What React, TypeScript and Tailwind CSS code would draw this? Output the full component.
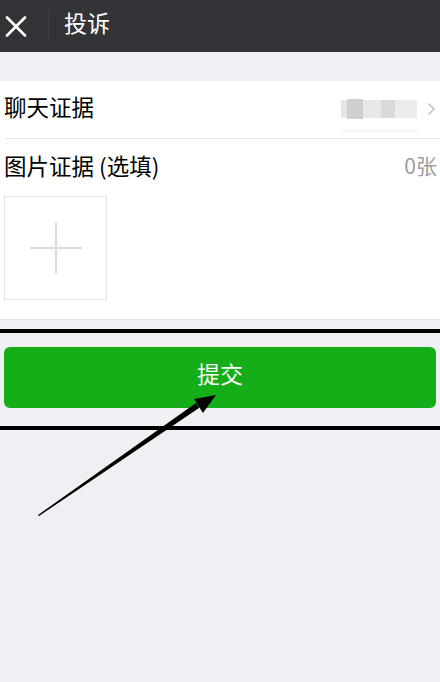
import React from "react";

export default function App() {
  const font = { fontFamily: '"Noto Sans CJK SC", "Noto Sans", sans-serif' };
  return (
    <div className="relative w-[440px] h-[682px] overflow-hidden bg-[#efeff4]" style={font}>
      {/* header */}
      <div className="h-[52px] bg-[#333438] flex items-center">
        <div className="w-[48px] h-full flex items-center pl-[5px]">
          <svg width="22" height="21" viewBox="0 0 22 21">
            <path d="M2 1.5 L20 19.5 M20 1.5 L2 19.5" stroke="#ffffff" strokeWidth="2.6" strokeLinecap="round" />
          </svg>
        </div>
        <div className="w-px h-[32px] bg-[#3e3f44]" />
        <div className="pl-[15px] text-[23px] leading-none text-white mb-[7px]">投诉</div>
      </div>

      <div className="h-[29px]" />

      {/* white section */}
      <div className="bg-white border-b border-[#e3e3e6] h-[239px] flex flex-col">
        <div className="h-[57px] flex items-center pl-[4px] pr-[4px] relative">
          <span className="text-[22.5px] text-black leading-none mb-[6px]">聊天证据</span>
          <div className="ml-auto flex items-center">
            <div className="flex items-center h-[20px] mr-[10px] mb-[2px]">
              <div className="w-[6px] h-[18px] bg-[#e6e6e6]" />
              <div className="w-[16px] h-[20px] bg-[#cfcfcf]" />
              <div className="w-[18px] h-[18px] bg-[#e8e8e8]" />
              <div className="w-[14px] h-[18px] bg-[#dadada]" />
              <div className="w-[22px] h-[18px] bg-[#ececec]" />
            </div>
            <svg width="9" height="14" viewBox="0 0 9 14" className="mb-[2px]">
              <path d="M1.5 1.5 L7 7 L1.5 12.5" fill="none" stroke="#c2c2c6" strokeWidth="1.6" />
            </svg>
          </div>
          <div className="absolute left-[342px] bottom-[6px] w-[76px] h-[2px] bg-[#f6f6f6]" />
        </div>
        <div className="h-px ml-[5px] bg-[#e5e5e5]" />
        <div className="h-[56px] flex items-center pl-[4px] pr-[3px]">
          <span className="text-[22.5px] text-black leading-none mb-[4px]">图片证据 (选填)</span>
          <span className="ml-auto text-[21px] text-[#9c9c9c] leading-none mb-[4px]">0张</span>
        </div>
        <div className="pl-[4px] pt-[1px]">
          <div className="w-[103px] h-[104px] border border-[#e2e2e2] flex items-center justify-center">
            <svg width="54" height="54" viewBox="0 0 54 54">
              <path d="M1 27 H53 M27 1 V53" stroke="#dcdcdc" strokeWidth="2.2" />
            </svg>
          </div>
        </div>
      </div>

      {/* annotated button band */}
      <div className="mt-[9px] border-t-[4px] border-b-[4px] border-black pt-[14px] pb-[18px] px-[4px]">
        <div className="h-[61px] rounded-[6px] bg-[#15ad18] flex items-center justify-center">
          <span className="text-[23px] text-white leading-none mb-[8px]">提交</span>
        </div>
      </div>

      {/* arrow annotation */}
      <svg className="absolute left-0 top-0 pointer-events-none" width="440" height="682" viewBox="0 0 440 682">
        <polygon points="38,515 39,516 199,408 196,403" fill="#000" />
        <polygon points="216,395 194,399 203,413" fill="#000" />
      </svg>
    </div>
  );
}
